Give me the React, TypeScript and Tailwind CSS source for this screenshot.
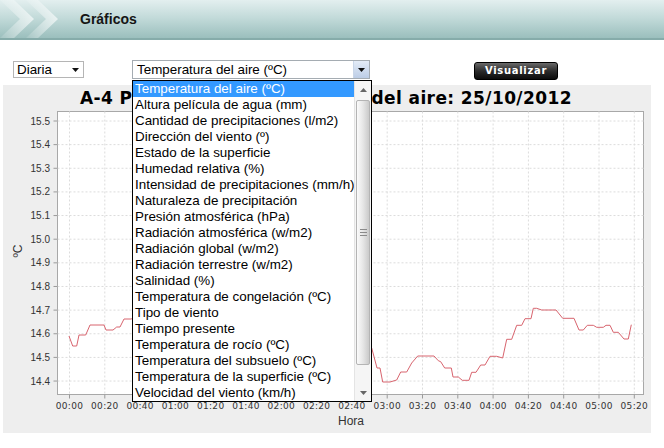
import React from 'react'

const VARIABLES = [
  'Temperatura del aire (ºC)',
  'Altura película de agua (mm)',
  'Cantidad de precipitaciones (l/m2)',
  'Dirección del viento (º)',
  'Estado de la superficie',
  'Humedad relativa (%)',
  'Intensidad de precipitaciones (mm/h)',
  'Naturaleza de precipitación',
  'Presión atmosférica (hPa)',
  'Radiación atmosférica (w/m2)',
  'Radiación global (w/m2)',
  'Radiación terrestre (w/m2)',
  'Salinidad (%)',
  'Temperatura de congelación (ºC)',
  'Tipo de viento',
  'Tiempo presente',
  'Temperatura de rocío (ºC)',
  'Temperatura del subsuelo (ºC)',
  'Temperatura de la superficie (ºC)',
  'Velocidad del viento (km/h)',
]

const Y_TICKS = [15.5, 15.4, 15.3, 15.2, 15.1, 15.0, 14.9, 14.8, 14.7, 14.6, 14.5, 14.4]
const X_TICKS = ['00:00', '00:20', '00:40', '01:00', '01:20', '01:40', '02:00', '02:20', '02:40', '03:00', '03:20', '03:40', '04:00', '04:20', '04:40', '05:00', '05:20']

// chart geometry, in svg coords (svg starts at page x=3, y=113)
const PLOT = { left: 54.5, right: 640.5, top: 0.5, bottom: 283.5 }
const yPos = (v: number) => 10 + (15.5 - v) * 236.4
const xPos = (i: number) => 66.5 + i * 35.3

// measured trace, page coords
const TRACE =
  '69,338 72.7,348 76.7,348 79,337 85.7,337 90,327 104,327 106,332 113,332 116.7,329 120,329 124,321 131.7,321 ' +
  '136,316 150,316 160,310 180,310 200,322 230,330 260,336 300,340 330,345 360,344 ' +
  '371.7,350 377,370 380,370 382.7,384 390,384 396.7,382 400.7,374 406.7,374 411.7,365 417.7,358 434,358 438.3,362.7 ' +
  '440.7,363.7 444.7,370 451.3,370 453,379 458.3,379 462.3,382.3 469,382.3 471.7,374.3 476,374.3 480.7,367 485,367 ' +
  '490,358.3 496.7,358.3 502.7,360 506.7,341.3 511.7,341.3 516.7,327.3 521.7,327.3 525,320.7 531,320.7 533.3,310.3 ' +
  '536.7,310.3 541.7,312 556,312 562.7,320.3 574,320.3 579,332 583.3,332 587.3,327.3 593.3,327.3 596.7,329.3 ' +
  '603.3,329.3 606,327.3 610,327.3 613.3,334.3 618.3,334.3 624,341 628.3,341 631.3,326.7'

function Header() {
  return (
    <div className="relative h-[40px] bg-gradient-to-b from-[#e3efef] via-[#c0d9d8] to-[#9bbfbd] border-b-2 border-[#86acaa] flex items-center">
      <svg className="absolute left-0 top-0" width="70" height="38" viewBox="0 0 70 38">
        <defs>
          <linearGradient id="chev" x1="0" x2="1" y1="0" y2="0">
            <stop offset="0" stopColor="#ffffff" stopOpacity="0.1" />
            <stop offset="1" stopColor="#ffffff" stopOpacity="0.65" />
          </linearGradient>
        </defs>
        <polygon points="0,0 14,0 34,19 14,38 0,38 20,19" fill="url(#chev)" />
        <polygon points="26,0 38,0 58,19 38,38 26,38 46,19" fill="url(#chev)" />
      </svg>
      <span className="ml-[80px] text-[14px] font-bold text-[#151515]">Gráficos</span>
    </div>
  )
}

function Controls() {
  return (
    <div className="flex items-start h-[20px] mt-[20px]">
      <div className="ml-[13px] mt-[1px] w-[71px] h-[17px] border border-[#b5b5b5] bg-white flex items-center justify-between pl-[3px] pr-[4px] text-[13.4px] leading-none">
        <span>Diaria</span>
        <svg width="7" height="4" viewBox="0 0 7 4"><polygon points="0,0 7,0 3.5,4" fill="#111" /></svg>
      </div>
      <div className="ml-[48px] w-[238px] h-[19px] border border-[#a5acb2] bg-white flex items-stretch text-[13.4px]">
        <span className="flex-1 pl-[4px] leading-[17px]">Temperatura del aire (ºC)</span>
        <div className="w-[16px] bg-gradient-to-b from-[#e4ecf7] to-[#bccde6] border-l border-[#c9d6e8] flex items-center justify-center">
          <svg width="7" height="4" viewBox="0 0 7 4"><polygon points="0,0 7,0 3.5,4" fill="#111" /></svg>
        </div>
      </div>
      <button className="ml-[104px] mt-[2px] w-[84px] h-[18px] rounded-[3px] border border-black bg-gradient-to-b from-[#6a6a6a] via-[#2c2c2c] to-[#0c0c0c] text-white font-bold text-[10px] tracking-[0.7px] font-['DejaVu_Sans',sans-serif] leading-none">
        Visualizar
      </button>
    </div>
  )
}

function Chart() {
  return (
    <div className="ml-[3px] mt-[5px] w-[648px] h-[348px] bg-[#eeeeee] flex flex-col">
      <div className="h-[26px] leading-[26px] pl-[77px] font-['DejaVu_Sans',sans-serif] font-bold text-[17px] tracking-[0.4px] text-black whitespace-nowrap">
        A-4 Pk 62,400 - Temperatura del aire: 25/10/2012
      </div>
      <svg width="648" height="322" viewBox="0 0 648 322" className="font-['DejaVu_Sans',sans-serif]">
        <rect x={PLOT.left} y={PLOT.top} width={PLOT.right - PLOT.left} height={PLOT.bottom - PLOT.top} fill="#ffffff" stroke="#a8a8a8" />
        {Y_TICKS.map((v) => (
          <g key={v}>
            <line x1={PLOT.left} x2={PLOT.right} y1={yPos(v)} y2={yPos(v)} stroke="#dcdcdc" strokeDasharray="2 2" />
            <line x1={PLOT.left - 4} x2={PLOT.left} y1={yPos(v)} y2={yPos(v)} stroke="#9a9a9a" />
            <text x={47} y={yPos(v) + 3.5} fontSize="10" textAnchor="end" fill="#333" fontFamily="Liberation Sans, sans-serif">
              {v.toFixed(1)}
            </text>
          </g>
        ))}
        {X_TICKS.map((t, i) => (
          <g key={t}>
            <line x1={xPos(i)} x2={xPos(i)} y1={PLOT.top} y2={PLOT.bottom} stroke="#dcdcdc" strokeDasharray="2 2" />
            <line x1={xPos(i)} x2={xPos(i)} y1={PLOT.bottom} y2={PLOT.bottom + 4} stroke="#9a9a9a" />
            <text x={xPos(i)} y={298} fontSize="9" textAnchor="middle" fill="#333" letterSpacing="0.3">
              {t}
            </text>
          </g>
        ))}
        <g transform="translate(-3 -113)">
          <polyline points={TRACE} fill="none" stroke="#d8646e" strokeWidth="1" />
        </g>
        <text x={348} y={314} fontSize="12" textAnchor="middle" fill="#333" fontFamily="Liberation Sans, sans-serif">
          Hora
        </text>
        <text transform="translate(19 140) rotate(-90)" fontSize="12" textAnchor="middle" fill="#333" fontFamily="Liberation Sans, sans-serif">
          ºC
        </text>
      </svg>
    </div>
  )
}

function DropdownList() {
  return (
    <div className="absolute left-[132px] top-[80px] w-[240px] h-[322px] border border-black bg-white flex text-[13.4px] leading-[16px]">
      <ul className="flex-1 overflow-hidden">
        {VARIABLES.map((v, i) => (
          <li key={v} className={i === 0 ? 'bg-[#3399ff] text-white pl-[2px] whitespace-nowrap' : 'text-black pl-[2px] whitespace-nowrap'}>
            {v}
          </li>
        ))}
      </ul>
      <div className="w-[17px] bg-[#f5f5f5] border-l border-[#e4e4e4] flex flex-col items-center">
        <div className="h-[17px] w-full flex items-center justify-center">
          <svg width="7" height="4" viewBox="0 0 7 4"><polygon points="0,4 7,4 3.5,0" fill="#666" /></svg>
        </div>
        <div className="mt-[2px] h-[265px] w-[14px] rounded-[2px] border border-[#b4b4b4] bg-gradient-to-r from-[#fbfbfb] via-[#e6e6e6] to-[#cacaca] flex flex-col items-center justify-center gap-[2px]">
          <div className="w-[7px] h-px bg-[#8a8a8a]" />
          <div className="w-[7px] h-px bg-[#8a8a8a]" />
          <div className="w-[7px] h-px bg-[#8a8a8a]" />
        </div>
        <div className="flex-1" />
        <div className="h-[17px] w-full flex items-center justify-center">
          <svg width="7" height="4" viewBox="0 0 7 4"><polygon points="0,0 7,0 3.5,4" fill="#666" /></svg>
        </div>
      </div>
    </div>
  )
}

export default function App() {
  return (
    <div className="relative w-[664px] h-[448px] bg-white overflow-hidden font-['Liberation_Sans',Arial,sans-serif] text-black">
      <Header />
      <Controls />
      <Chart />
      <DropdownList />
    </div>
  )
}
